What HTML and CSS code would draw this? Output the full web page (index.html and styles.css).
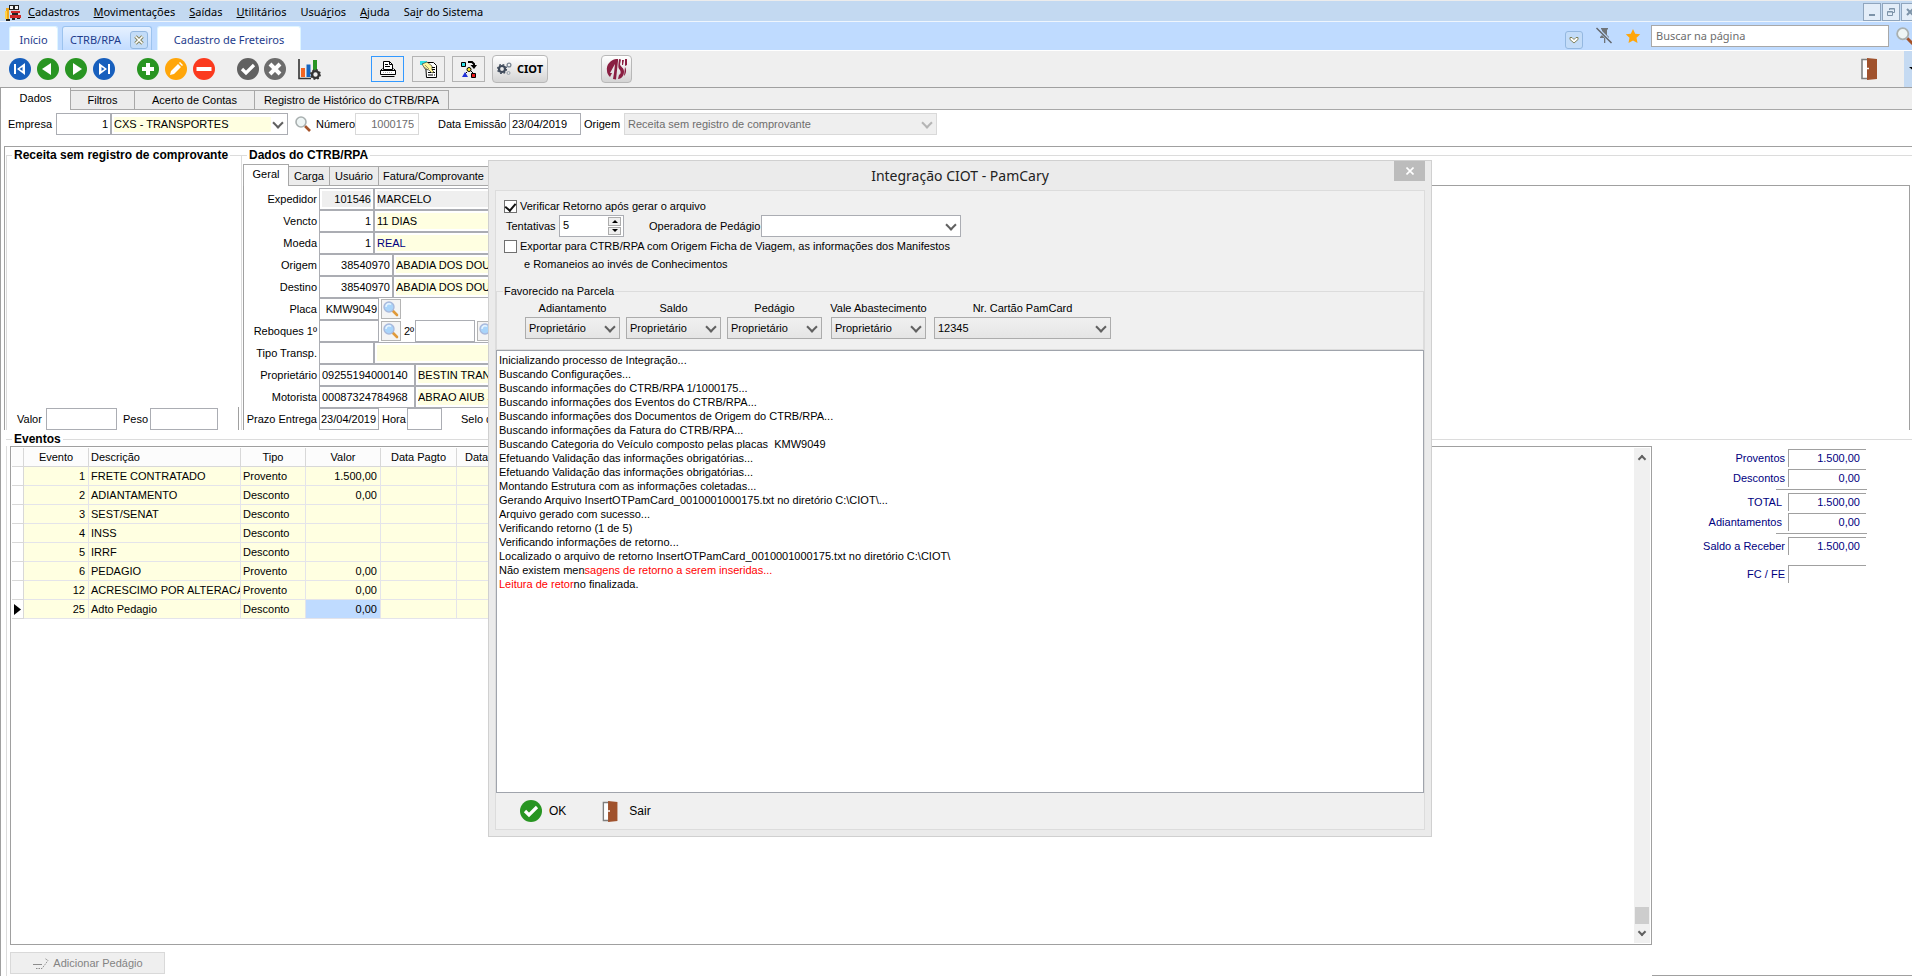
FILE: index.html
```html
<!DOCTYPE html>
<html lang="pt-BR">
<head>
<meta charset="utf-8">
<title>CTRB/RPA</title>
<link rel="stylesheet" href="styles.css">
</head>
<body>
<svg class="defs" width="0" height="0" aria-hidden="true">
  <symbol id="lens" viewBox="0 0 16 16"><path d="M10 10l5 5" stroke="#a5532a" stroke-width="2.6"/><circle cx="6" cy="6" r="5" fill="#eef5f5" stroke="#a9b0b0" stroke-width="1.6"/></symbol>
  <symbol id="lens-blue" viewBox="0 0 16 16"><path d="M9.500 9.500l4.500 4.500" stroke="#e09a3a" stroke-width="2.600" stroke-linecap="round"/><circle cx="6" cy="6" r="5" fill="#a9d4fa" stroke="#a9b9dc" stroke-width="1.400"/><path d="M3 6a3 3 0 0 1 5-2.500" stroke="#e8f5ff" stroke-width="1.500" fill="none"/></symbol>
  <symbol id="door" viewBox="0 0 16 24"><path d="M1 2.500h6v19H1z" fill="#fff" stroke="#808080" stroke-width="1.600"/><path d="M6 1l10 1v20L6 23z" fill="#a0522d"/><path d="M6 11.500h2" stroke="#fff" stroke-width="1.600"/></symbol>
</svg>

<nav class="menu">
  <svg class="app-icon" width="16" height="17" viewBox="0 0 16 17"><path d="M4 1h10v5H4z" fill="#222"/><path d="M5 2h3v3H5zM10 2h3v3h-3z" fill="#f4f4f4"/><path d="M1 4h3v12H1z" fill="#f0a818"/><path d="M0 7h2v8H0z" fill="#ffd24a"/><path d="M5 6h10v6H5z" fill="#d8d8e0"/><path d="M6 7h9v2H6zM5 11h11v3H5z" fill="#d02828"/><path d="M7 9h6v2H7z" fill="#222"/><path d="M1 15h4v2H1zM7 14h3v2H7zM12 14h3v1h-3z" fill="#222"/></svg>
  <a href="#"><u>C</u>adastros</a><a href="#"><u>M</u>ovimentações</a><a href="#"><u>S</u>aídas</a><a href="#"><u>U</u>tilitários</a><a href="#">Usuá<u>r</u>ios</a><a href="#"><u>A</u>juda</a><a href="#">Sa<u>i</u>r do Sistema</a>
  <div class="win-buttons">
    <button aria-label="Minimizar"><svg width="10" height="10" viewBox="0 0 10 10"><path d="M2 8h6" stroke="#7d93a8" stroke-width="2"/></svg></button>
    <button aria-label="Restaurar"><svg width="10" height="10" viewBox="0 0 10 10" fill="none" stroke="#7d93a8"><path d="M3.500 3V1.500h5v4H7M3.500 2h5M1.500 4.500h5v4h-5zM1.500 5h5"/></svg></button>
    <button aria-label="Fechar"><svg width="10" height="10" viewBox="0 0 10 10"><path d="M2 2l6 6M8 2l-6 6" stroke="#7d93a8" stroke-width="2"/></svg></button>
  </div>
</nav>

<header class="pages">
  <button class="page-tab home">Início</button>
  <div class="page-tab current"><button>CTRB/RPA</button><button class="tab-close" aria-label="Fechar aba"><svg width="10" height="10" viewBox="0 0 10 10"><path d="M1.500 1.500l7 7M8.500 1.500l-7 7" stroke="#80805a" stroke-width="3.400"/><path d="M1.500 1.500l7 7M8.500 1.500l-7 7" stroke="#fff" stroke-width="1.600"/></svg></button></div>
  <button class="page-tab fret">Cadastro de Freteiros</button>
  <div class="page-tools">
    <button class="drop" aria-label="Abas"><svg width="10" height="8" viewBox="0 0 10 8"><path d="M1 1.500h2l2 2 2-2h2v2L5 7 1 3.500z" fill="#fff" stroke="#77774a" stroke-width=".9"/></svg></button>
    <button class="pin" aria-label="Fixar"><svg width="16" height="17" viewBox="0 0 16 17"><path d="M5 1h7v1.500h-1V8l2 2v1H9.300v5H8v-5H4v-1l2-2V2.500H5z" fill="#707478"/><path d="M1 1l15 15" stroke="#bfdbff" stroke-width="3"/><path d="M.5 1l15 15" stroke="#606468" stroke-width="1.500"/></svg></button>
    <button class="star" aria-label="Favorito"><svg width="16" height="16" viewBox="0 0 16 16"><path d="M8 1l2.200 4.700 5 .6-3.700 3.500 1 5.100L8 12.400l-4.500 2.500 1-5.100L.8 6.300l5-.6z" fill="#ffa60a"/></svg></button>
    <input type="text" placeholder="Buscar na página" aria-label="Buscar na página">
    <button class="find" aria-label="Buscar"><svg width="18" height="18"><use href="#lens"/></svg></button>
  </div>
</header>

<div class="toolbar">
  <div class="group g-nav">
    <button aria-label="Primeiro"><svg width="22" height="22" viewBox="0 0 22 22"><circle cx="11" cy="11" r="11" fill="#175fbd"/><path d="M5 6h2v10H5zM8 11l8-6v12z" fill="#fff"/><path d="M13.500 9l-3 2 3 2z" fill="#175fbd"/></svg></button>
    <button aria-label="Anterior"><svg width="22" height="22" viewBox="0 0 22 22"><circle cx="11" cy="11" r="11" fill="#289522"/><path d="M5 11l9-6v12z" fill="#fff"/></svg></button>
    <button aria-label="Próximo"><svg width="22" height="22" viewBox="0 0 22 22"><circle cx="11" cy="11" r="11" fill="#289522"/><path d="M17 11L8 5v12z" fill="#fff"/></svg></button>
    <button aria-label="Último"><svg width="22" height="22" viewBox="0 0 22 22"><circle cx="11" cy="11" r="11" fill="#175fbd"/><path d="M15 6h2v10h-2zM14 11L6 5v12z" fill="#fff"/><path d="M8.500 9l3 2-3 2z" fill="#175fbd"/></svg></button>
  </div>
  <div class="group g-edit">
    <button aria-label="Novo"><svg width="22" height="22" viewBox="0 0 22 22"><circle cx="11" cy="11" r="11" fill="#289522"/><path d="M11 5v12M5 11h12" stroke="#fff" stroke-width="4"/></svg></button>
    <button aria-label="Editar"><svg width="22" height="22" viewBox="0 0 22 22"><circle cx="11" cy="11" r="11" fill="#ffa60a"/><path d="M5 17l1-4 7-7 3 3-7 7zM14 5l1-1 3 3-1 1z" fill="#fff"/></svg></button>
    <button aria-label="Excluir"><svg width="22" height="22" viewBox="0 0 22 22"><circle cx="11" cy="11" r="11" fill="#fb3a1e"/><path d="M3.500 11h15" stroke="#fff" stroke-width="4"/></svg></button>
  </div>
  <div class="group g-conf">
    <button aria-label="Confirmar"><svg width="22" height="22" viewBox="0 0 22 22"><circle cx="11" cy="11" r="11" fill="#616161"/><path d="M5 11l4 4 8-8" stroke="#fff" stroke-width="3.200" fill="none"/></svg></button>
    <button aria-label="Cancelar"><svg width="22" height="22" viewBox="0 0 22 22"><circle cx="11" cy="11" r="11" fill="#6c6c6c"/><path d="M6 6l10 10M16 6L6 16" stroke="#fff" stroke-width="4"/></svg></button>
  </div>
  <button class="chart" aria-label="Gráficos"><svg width="23" height="22" viewBox="0 0 23 22"><path d="M1 1v19.500h12" stroke="#333" stroke-width="1.600" fill="none"/><path d="M3 10h4v9H3z" fill="#f26522"/><path d="M8.500 6.500h4V19h-4z" fill="#1565c0"/><path d="M15 2h4v10h-4z" fill="#289522"/><circle cx="17.500" cy="16.500" r="3.400" fill="none" stroke="#333" stroke-width="2.400"/><circle cx="17.500" cy="16.500" r="4.700" fill="none" stroke="#333" stroke-width="1.500" stroke-dasharray="1.840 1.850"/></svg></button>
  <button class="tool print" aria-label="Imprimir"><svg width="18" height="17" viewBox="0 0 18 17" fill="#fff" stroke="#000"><path d="M4.500 8.500v-8h6l3 3v5z"/><path d="M6 3.500h3M6 5.500h5M10.500.5v3h3" fill="none"/><path d="M1.500 9.500l2-2M14.500 7.500l2 2M1.500 9.500h15v4h-15zM2.500 15.500h13" /><path d="M4 11.500h10" stroke="#aaa" stroke-dasharray="1 1"/></svg></button>
  <button class="tool" aria-label="Consultar documento"><svg width="18" height="17" viewBox="0 0 18 17"><path d="M5.500 1.500h8l3 3v12h-10z" fill="#fff" stroke="#000"/><path d="M12 6.500h3M12 8.500h3M8 11.500h3M12 11.500h3M8 14h5M14 14h1" stroke="#000"/><path d="M0 0h7v4H0z" fill="#2fe0e8"/><path d="M2 3l5-2 5 4v4l2 2-2 1-3-3-4-1z" fill="#fff79a" stroke="#222" stroke-width=".6"/><path d="M5 4l4 4M4 6l4 3" stroke="#555" stroke-width=".6"/></svg></button>
  <button class="tool" aria-label="Fluxo"><svg width="18" height="18" viewBox="0 0 18 18" stroke="#000"><path d="M1.500 2.500h4v4h-4z" fill="#2fe0e8"/><path d="M8 2h4l2 2v3" fill="none" stroke-width="2"/><path d="M10.500 5h6.500l-3 4z" stroke="none"/><circle cx="9" cy="9.500" r="2" fill="#ffee2a"/><path d="M7 12l-2 2M11 11l2 2" fill="none"/><path d="M2 17l3-5 3 5z" fill="#2030d8" stroke="none"/><path d="M11.500 13.500h4v4h-4z" fill="#e81818"/></svg></button>
  <button class="ciot"><svg width="15" height="14" viewBox="0 0 15 14" fill="none"><circle cx="5" cy="7" r="3" stroke="#3f4a5a" stroke-width="2.200"/><circle cx="5" cy="7" r="4.500" stroke="#3f4a5a" stroke-width="1.200" stroke-dasharray="1.770"/><circle cx="12" cy="3" r="1.900" stroke="#7b8794" stroke-width="1.300"/><circle cx="11.500" cy="11" r="1.500" stroke="#98a2ac"/></svg><span>CIOT</span></button>
  <button class="logo" aria-label="4S"><svg width="22" height="22" viewBox="0 0 22 22" fill="#8a1f42"><path d="M10 1C4 2 0 7 1 13c0 2 1 4 3 6l2-4H4l5-9-1 9-1 6 3 .500L12 3V1z"/><path d="M13 1l2 .500-1 5c1 3 4 3 4 7s-2 7-6 7.500l1-4c2-1 2-3 1-5-2-2-2-3-1-11zM16 2h2l-1 5h-1zM19 1h2v6l-2 1zM19 9c2 3 1 7-1 9z"/></svg></button>
  <button class="exit" aria-label="Sair"><svg width="16" height="24"><use href="#door"/></svg></button>
  <button class="more" aria-label="Mais"><svg width="5" height="5" viewBox="0 0 5 5"><path d="M0 0h5v4z"/></svg></button>
</div>

<div class="strip" role="tablist">
  <button class="st on" role="tab">Dados</button><button class="st w64" role="tab">Filtros</button><button class="st w120" role="tab">Acerto de Contas</button><button class="st w194" role="tab">Registro de Histórico do CTRB/RPA</button>
</div>

<main class="work">
  <div class="head">
    <label for="empresa">Empresa</label><input id="empresa" class="num w55" value="1">
    <span class="combo w177 pale"><select aria-label="Nome da empresa"><option>CXS - TRANSPORTES</option></select></span>
    <button class="bare" aria-label="Procurar empresa"><svg width="16" height="16"><use href="#lens"/></svg></button>
    <label for="numero">Número</label><input id="numero" class="num w64 off" value="1000175" disabled>
    <label for="emissao" class="emissao">Data Emissão</label><input id="emissao" class="w72" value="23/04/2019">
    <label for="origem-doc">Origem</label><span class="combo w313 off"><select id="origem-doc" disabled><option>Receita sem registro de comprovante</option></select></span>
  </div>

  <div class="panes">
    <fieldset class="receita">
      <legend>Receita sem registro de comprovante</legend>
      <div class="sums"><label for="valor">Valor</label><input id="valor" class="w71"><label for="peso">Peso</label><input id="peso" class="w68"></div>
    </fieldset>
    <fieldset class="dados">
      <legend>Dados do CTRB/RPA</legend>
      <div class="subtabs" role="tablist"><button class="st on" role="tab">Geral</button><button class="st w41" role="tab">Carga</button><button class="st w49" role="tab">Usuário</button><button class="st w110" role="tab">Fatura/Comprovante</button></div>
      <div class="form">
        <div class="row"><label for="exp">Expedidor</label><input id="exp" class="num w55 gray" value="101546"><input class="w200 gray" aria-label="Nome do expedidor" value="MARCELO                   ALVES"></div>
        <div class="row"><label for="ven">Vencto</label><input id="ven" class="num w55" value="1"><input class="w200 pale" aria-label="Prazo de vencimento" value="11 DIAS"></div>
        <div class="row"><label for="moe">Moeda</label><input id="moe" class="num w55" value="1"><input class="w200 pale navy" aria-label="Nome da moeda" value="REAL"></div>
        <div class="row"><label for="ori">Origem</label><input id="ori" class="num w74" value="38540970"><input class="w200 pale" aria-label="Cidade de origem" value="ABADIA DOS DOURADOS"></div>
        <div class="row"><label for="des">Destino</label><input id="des" class="num w74" value="38540970"><input class="w200 pale" aria-label="Cidade de destino" value="ABADIA DOS DOURADOS"></div>
        <div class="row"><label for="pla">Placa</label><input id="pla" class="num w60" value="KMW9049"><button class="look" aria-label="Procurar placa"><svg width="16" height="16"><use href="#lens-blue"/></svg></button></div>
        <div class="row"><label for="re1">Reboques 1º</label><input id="re1" class="w60"><button class="look" aria-label="Procurar reboque 1"><svg width="16" height="16"><use href="#lens-blue"/></svg></button><label class="inline" for="re2">2º</label><input id="re2" class="w60"><button class="look" aria-label="Procurar reboque 2"><svg width="16" height="16"><use href="#lens-blue"/></svg></button></div>
        <div class="row"><label for="tip">Tipo Transp.</label><input id="tip" class="w55"><input class="w200 pale" aria-label="Nome do tipo de transporte"></div>
        <div class="row"><label for="pro">Proprietário</label><input id="pro" class="w96" value="09255194000140"><input class="w200 pale" aria-label="Nome do proprietário" value="BESTIN TRANSPORTES"></div>
        <div class="row"><label for="mot">Motorista</label><input id="mot" class="w96" value="00087324784968"><input class="w200 pale" aria-label="Nome do motorista" value="ABRAO AIUB JR"></div>
        <div class="row"><label for="pra">Prazo Entrega</label><input id="pra" class="w60" value="23/04/2019"><label class="inline" for="hor">Hora</label><input id="hor" class="w35"><label class="inline selo" for="selo">Selo do</label><input id="selo" class="w60"></div>
      </div>
    </fieldset>
  </div>

  <section class="eventos" aria-labelledby="ev-title">
    <h2 id="ev-title">Eventos</h2>
    <div class="ev-body">
      <div class="ev-left">
        <div class="gridbox">
          <table>
            <colgroup><col class="c12"><col class="c65"><col class="c152"><col class="c65"><col class="c75"><col class="c76"><col class="c76"></colgroup>
            <thead><tr><th></th><th>Evento</th><th class="l">Descrição</th><th>Tipo</th><th>Valor</th><th>Data Pagto</th><th class="d">Data</th></tr></thead>
            <tbody>
              <tr><td></td><td>1</td><td>FRETE CONTRATADO</td><td>Provento</td><td>1.500,00</td><td></td><td></td></tr>
              <tr><td></td><td>2</td><td>ADIANTAMENTO</td><td>Desconto</td><td>0,00</td><td></td><td></td></tr>
              <tr><td></td><td>3</td><td>SEST/SENAT</td><td>Desconto</td><td></td><td></td><td></td></tr>
              <tr><td></td><td>4</td><td>INSS</td><td>Desconto</td><td></td><td></td><td></td></tr>
              <tr><td></td><td>5</td><td>IRRF</td><td>Desconto</td><td></td><td></td><td></td></tr>
              <tr><td></td><td>6</td><td>PEDAGIO</td><td>Provento</td><td>0,00</td><td></td><td></td></tr>
              <tr><td></td><td>12</td><td>ACRESCIMO POR ALTERACAO</td><td>Provento</td><td>0,00</td><td></td><td></td></tr>
              <tr><td><svg width="7" height="11" viewBox="0 0 7 11"><path d="M0 0l7 5.500L0 11z"/></svg></td><td>25</td><td>Adto Pedagio</td><td>Desconto</td><td class="sel">0,00</td><td></td><td></td></tr>
            </tbody>
          </table>
          <div class="scroll"><i class="up"></i><b></b><i class="down"></i></div>
        </div>
        <button class="add" disabled><svg width="18" height="14" viewBox="0 0 18 14" fill="none" stroke="#8c8c8c"><path d="M1 8.500h9"/><path d="M4 12.500h6l3-4 3-4-3-2" stroke-dasharray="1.500 1"/></svg>Adicionar Pedágio</button>
      </div>
      <div class="totals">
        <div class="tr"><label for="t1">Proventos</label><output id="t1">1.500,00</output></div>
        <div class="tr"><label for="t2">Descontos</label><output id="t2">0,00</output></div>
        <hr>
        <div class="tr in"><label for="t3">TOTAL</label><output id="t3">1.500,00</output></div>
        <div class="tr in"><label for="t4">Adiantamentos</label><output id="t4">0,00</output></div>
        <hr>
        <div class="tr"><label for="t5">Saldo a Receber</label><output id="t5">1.500,00</output></div>
        <div class="tr last"><label for="t6">FC / FE</label><output id="t6"></output></div>
      </div>
    </div>
  </section>
</main>

<section class="dialog" role="dialog" aria-labelledby="dlg-title">
  <div class="title"><h1 id="dlg-title">Integração CIOT - PamCary</h1><button aria-label="Fechar"><svg width="8" height="8" viewBox="0 0 8 8"><path d="M.5.5l7 7M7.500.5l-7 7" stroke="#fff" stroke-width="1.600"/></svg></button></div>
  <div class="dlg-body">
    <div class="opts">
      <label class="check"><input type="checkbox" checked><span>Verificar Retorno após gerar o arquivo</span></label>
      <div class="line">
        <label for="tent">Tentativas</label>
        <span class="spin"><input id="tent" value="5"><span><button aria-label="Mais um"><i class="tri-up"></i></button><button aria-label="Menos um"><i class="tri-down"></i></button></span></span>
        <label for="oper" class="oper">Operadora de Pedágio</label>
        <span class="combo w200"><select id="oper"><option></option></select></span>
      </div>
      <label class="check"><input type="checkbox"><span>Exportar para CTRB/RPA com Origem Ficha de Viagem, as informações dos Manifestos</span></label>
      <p>e Romaneios ao invés de Conhecimentos</p>
    </div>
    <fieldset class="fav">
      <legend>Favorecido na Parcela</legend>
      <div class="favs">
        <div><label for="f1">Adiantamento</label><span class="combo btn w95"><select id="f1"><option>Proprietário</option></select></span></div>
        <div><label for="f2">Saldo</label><span class="combo btn w95"><select id="f2"><option>Proprietário</option></select></span></div>
        <div><label for="f3">Pedágio</label><span class="combo btn w95"><select id="f3"><option>Proprietário</option></select></span></div>
        <div class="vale"><label for="f4">Vale Abastecimento</label><span class="combo btn w95"><select id="f4"><option>Proprietário</option></select></span></div>
        <div class="card"><label for="f5">Nr. Cartão PamCard</label><span class="combo btn w177"><select id="f5"><option>12345</option></select></span></div>
      </div>
    </fieldset>
    <div class="log" role="log">Inicializando processo de Integração...
Buscando Configurações...
Buscando informações do CTRB/RPA 1/1000175...
Buscando informações dos Eventos do CTRB/RPA...
Buscando informações dos Documentos de Origem do CTRB/RPA...
Buscando informações da Fatura do CTRB/RPA...
Buscando Categoria do Veículo composto pelas placas  KMW9049
Efetuando Validação das informações obrigatórias...
Efetuando Validação das informações obrigatórias...
Montando Estrutura com as informações coletadas...
Gerando Arquivo InsertOTPamCard_0010001000175.txt no diretório C:\CIOT\...
Arquivo gerado com sucesso...
Verificando retorno (1 de 5)
Verificando informações de retorno...
Localizado o arquivo de retorno InsertOTPamCard_0010001000175.txt no diretório C:\CIOT\
Não existem men<em>sagens de retorno a serem inseridas...</em>
<em>Leitura de retor</em>no finalizada.</div>
    <div class="actions">
      <button class="ok"><svg width="22" height="22" viewBox="0 0 22 22"><circle cx="11" cy="11" r="11" fill="#289522"/><path d="M5 11l4 4 8-8" stroke="#fff" stroke-width="3.200" fill="none"/></svg>OK</button>
      <button class="sair"><svg width="16" height="23" viewBox="0 0 16 24"><use href="#door"/></svg>Sair</button>
    </div>
  </div>
</section>
</body>
</html>
```
FILE: styles.css
```css
* { box-sizing: border-box; }
body {
  margin: 0;
  min-height: 100vh;
  display: flex;
  flex-direction: column;
  position: relative;
  overflow: hidden;
  background: #fff;
  color: #000;
  font: 11px/14px "Liberation Sans", Arial, sans-serif;
}
button, input, select, output { font: inherit; color: inherit; }
button { border: 0; padding: 0; background: none; }
svg { display: block; flex: none; }
a { color: inherit; text-decoration: none; }
label { white-space: nowrap; }
.defs { position: absolute; }

/* menu bar */
.menu {
  height: 22px;
  display: flex;
  align-items: center;
  gap: 14px;
  padding: 2px 0 0 5px;
  background: #c3d9f1;
  border-top: 1px solid #ececec;
  border-bottom: 1px solid #eef5fc;
  font: 11px/18px "Noto Sans", sans-serif;
  white-space: nowrap;
}
.app-icon { margin-right: -7px; }
.win-buttons { margin-left: auto; display: flex; gap: 1px; align-self: stretch; flex: none; margin-right: -7px; }
.win-buttons button { width: 18px; height: 18px; border: 1px solid #8fa5bd; background: #e3edf8; display: grid; place-items: center; }

/* page tabs */
.pages {
  height: 29px;
  display: flex;
  align-items: flex-end;
  padding-left: 9px;
  background: #bfdbff;
  border-bottom: 1px solid #fff;
  font: 11px/16px "Noto Sans", sans-serif;
  color: #1e3c8c;
}
.page-tab { height: 24px; background: #fff; border: 1px solid #dff5ff; border-bottom: 0; border-radius: 3px 3px 0 0; text-align: center; white-space: nowrap; padding-top: 2px; }
.page-tab.home { width: 49px; margin-right: 4px; }
.page-tab.current { width: 90px; margin-right: 5px; background: linear-gradient(#e6f1ff, #c2dcff); border-color: #9cc3ee; display: flex; align-items: center; justify-content: space-between; padding: 2px 3px 0 7px; }
.page-tab.fret { width: 144px; }
.tab-close, .drop { width: 18px; height: 18px; border: 1px solid #94b8e0; border-radius: 3px; background: #c3dcf8; display: grid; place-items: center; }
.page-tools { margin-left: auto; align-self: stretch; display: flex; align-items: center; margin-right: -2px; padding-bottom: 1px; }
.drop { margin: 8px 13px 0 0; }
.pin { margin-right: 13px; }
.star { margin-right: 10px; }
.page-tools input { width: 238px; height: 22px; border: 1px solid #a8a8a8; padding: 0 4px; background: #fff; font-size: 11px; margin-right: 7px; }
.page-tools input::placeholder { color: #6d6d6d; }

/* toolbar */
.toolbar { height: 37px; display: flex; align-items: center; background: #efefef; border-bottom: 1px solid #a0a0a0; padding-left: 9px; }
.group { display: flex; }
.g-nav, .g-edit { gap: 6px; }
.g-nav { margin-right: 22px; }
.g-edit { margin-right: 22px; }
.g-conf { gap: 5px; margin-right: 12px; }
.chart { margin-right: 50px; }
.tool { width: 33px; height: 26px; border: 1px solid #b4b4b4; display: grid; place-items: center; margin-right: 7px; }
.tool.print { border-color: #3399ff; margin-right: 8px; }
.ciot, .logo { height: 28px; border: 1px solid #b8b8b8; border-radius: 4px; background: linear-gradient(#fff, #d4d4d4); display: flex; align-items: center; justify-content: center; }
.ciot { width: 56px; gap: 5px; font: bold 11px/16px "Noto Sans", sans-serif; margin-right: 53px; }
.logo { width: 31px; }
.exit { margin-left: auto; margin-right: 27px; }
.more { width: 8px; align-self: stretch; background: #c5daf2; padding-left: 5px; overflow: hidden; }

/* tab strips */
.strip, .subtabs { display: flex; align-items: flex-end; }
.strip { height: 22px; background: #efefef; border-bottom: 1px solid #a8a8a8; border-left: 1px solid #a0a0a0; flex: none; }
.st { height: 20px; border: 1px solid #a8a8a8; border-left: 0; background: #ececec; white-space: nowrap; margin-bottom: -1px; }
.st.on { background: #fff; height: 22px; border-bottom: 0; border-top: 0; padding-bottom: 3px; }
.strip .on { width: 70px; }
.w64 { width: 64px; } .w120 { width: 120px; } .w194 { width: 194px; }
.w41 { width: 41px; } .w49 { width: 49px; } .w110 { width: 110px; }

/* fields */
input { height: 22px; border: 1px solid #abadb3; padding: 2px; background: #fff; outline: 0; border-radius: 0; }
.num { text-align: right; }
.w35 { width: 35px; } .w55 { width: 55px; } .w60 { width: 60px; } .w68 { width: 68px; } .w71 { width: 71px; }
.w72 { width: 72px; } .w74 { width: 74px; } .w95 { width: 95px; } .w96 { width: 96px; }
.w177 { width: 177px; } .w200 { width: 200px; } .w313 { width: 313px; }
input.w60 { padding: 2px 1px; }
input.pale { background: linear-gradient(#ffffe1, #ffffe1) content-box, #fff; }
input.gray { background: linear-gradient(#efefef, #efefef) content-box, #fff; }
.navy { color: #000080; }
.off, .off select { color: #6d6d6d; opacity: 1; }
input.off { border-color: #d9d9d9; padding-right: 4px; background: #fff; }
.combo { position: relative; display: inline-block; height: 22px; flex: none; }
.combo select { appearance: none; width: 100%; height: 22px; border: 1px solid #abadb3; border-radius: 0; background: #fff; padding: 0 16px 1px 3px; outline: 0; opacity: 1; }
.combo::after { content: ""; position: absolute; right: 6px; top: 6px; width: 6px; height: 6px; border: solid #606060; border-width: 0 2px 2px 0; transform: rotate(45deg); pointer-events: none; }
.combo.pale select { background: linear-gradient(90deg, #ffffe1 157px, #fff 157px) 2px 3px / 100% 15px no-repeat, #fff; padding-left: 2px; }
.combo.off select { background: #efefef; border-color: #d9d9d9; }
.combo.off::after { border-color: #b4b4b4; }
.combo.btn select { background: linear-gradient(#f0f0f0, #e5e5e5); border-color: #acacac; }

/* work area */
.work { flex: 1; display: flex; flex-direction: column; border-left: 1px solid #a0a0a0; min-width: 0; }
.head { display: flex; align-items: center; padding: 3px 0 11px 7px; }
.head label[for="empresa"] { width: 48px; }
.head .combo.pale { margin-right: 7px; }
.head .bare { margin-right: 5px; }
.head label[for="numero"] { width: 39px; }
.emissao { margin-left: 19px; width: 71px; }
.head label[for="origem-doc"] { margin-left: 3px; width: 40px; }
fieldset { margin: 0; padding: 0; border: 0; min-width: 0; }
legend { padding: 0 2px; margin-left: 5px; }
.panes { display: flex; margin-left: 3px; border-top: 1px solid #a0a0a0; border-left: 1px solid #a0a0a0; padding: 1px 0 0 1px; }
.panes legend, .eventos h2 { font: bold 12px/14px "Liberation Sans", Arial, sans-serif; }
.receita { width: 236px; border: 1px solid #dcdcdc; border-bottom: 0; display: flex; flex-direction: column; flex: none; }
.sums { margin-top: auto; display: flex; align-items: center; height: 23px; margin-right: 2px; border-right: 1px solid #a0a0a0; padding-left: 10px; }
.sums label { width: 29px; }
.sums label[for="peso"] { width: 27px; margin-left: 6px; }
.dados { flex: 1; border-top: 1px solid #dcdcdc; }
.dados legend { margin-left: 5px; }
.subtabs { height: 23px; padding-left: 1px; }
.subtabs .on { width: 46px; border: 1px solid #a8a8a8; border-bottom: 0; position: relative; }
.form { margin-right: 2px; margin-left: 1px; border: 1px solid #a0a0a0; border-bottom: 0; padding-top: 2px; overflow: hidden; }
.row { display: flex; align-items: center; height: 22px; }
.row > label:first-child { width: 75px; padding-right: 2px; text-align: right; }
.row > label:first-child, .row input { flex: none; }
.look { width: 20px; height: 20px; border: 1px solid #b4b4b4; background: #f4f4f4; display: grid; place-items: center; margin-left: 2px; flex: none; }
.row .inline { margin-left: 3px; width: 25px; }
.row .inline[for="re2"] { width: 11px; }
.row .selo { margin-left: 19px; width: 45px; }

/* events */
.eventos { flex: 1; margin: 2px 0 0 5px; display: flex; flex-direction: column; }
.eventos h2 { margin: 0; display: flex; align-items: center; gap: 2px; }
.eventos h2::before, .eventos h2::after { content: ""; height: 1px; background: #dcdcdc; width: 6px; }
.eventos h2::after { flex: 1; }
.ev-body { flex: 1; display: flex; padding-left: 3px; border-left: 1px solid #dcdcdc; }
.ev-left { flex: 1; display: flex; flex-direction: column; align-items: flex-start; min-width: 0; padding-bottom: 2px; }
.gridbox { flex: 1; align-self: stretch; border: 1px solid #a0a0a0; padding: 1px; display: flex; justify-content: space-between; align-items: flex-start; }
table { table-layout: fixed; width: 521px; border-spacing: 0; flex: none; }
.c12 { width: 12px; } .c65 { width: 65px; } .c152 { width: 152px; } .c75 { width: 75px; } .c76 { width: 76px; }
th, td { height: 19px; padding: 0 2px; border-right: 1px solid #e4e4ea; border-bottom: 1px solid #e4e4ea; font-weight: normal; overflow: hidden; white-space: nowrap; line-height: 14px; }
th { background: #fcfcfc; border-color: #d8d8d8; }
th.l { text-align: left; }
th.d { text-align: left; padding-left: 8px; }
td { background: #ffffe1; }
td:first-child { background: #fff; border-color: #d8d8d8; }
td:nth-child(2), td:nth-child(5) { text-align: right; padding-right: 3px; }
td:nth-child(3) { padding-right: 0; }
td.sel { background: #bfdbff; }
.scroll { width: 16px; align-self: stretch; background: #f0f0f0; display: flex; flex-direction: column; align-items: center; padding: 8px 0; }
.scroll i { width: 6px; height: 6px; border: solid #606060; border-width: 2px 0 0 2px; transform: rotate(45deg); }
.scroll .down { border-width: 0 2px 2px 0; }
.scroll b { width: 14px; height: 17px; background: #cdcdcd; margin: auto 0 5px; }
.add { width: 155px; height: 22px; margin-top: 7px; border: 1px solid #d9d9d9; background: #efefef; color: #838383; display: flex; align-items: center; justify-content: center; gap: 3px; flex: none; }
.totals { width: 260px; padding: 3px 45px 0 0; color: #000080; display: flex; flex-direction: column; align-items: flex-end; flex: none; border-bottom: 1px solid #a0a0a0; }
.tr { height: 20px; display: flex; gap: 3px; padding-right: 1px; }
.tr.in { gap: 6px; }
.tr label { padding-top: 2px; }
.tr output { width: 78px; height: 18px; border: solid #a0a0a0; border-width: 1px 0 0 1px; text-align: right; padding: 1px 6px 0 0; }
.tr.last { margin-top: 8px; }
.totals hr { width: 91px; margin: 0 0 3px; border: 0; border-top: 1px solid #a0a0a0; }

/* dialog window */
.dialog { position: absolute; left: 488px; top: 160px; width: 944px; height: 677px; display: flex; flex-direction: column; background: #ebebeb; border: 1px solid #d0d0d0; padding: 0 6px 6px; }
.title { height: 29px; display: flex; justify-content: center; position: relative; flex: none; }
.title h1 { margin: 5px 0 0; font: 14px/20px "Noto Sans", sans-serif; color: #222; }
.title button { position: absolute; right: 0; top: 0; width: 31px; height: 20px; background: #bcbcbc; display: grid; place-items: center; }
.dlg-body { flex: 1; display: flex; flex-direction: column; background: #f0f0f0; border: 1px solid #dcdcdc; }
.opts { padding: 8px 0 0 8px; }
.check { display: flex; align-items: center; height: 14px; gap: 3px; }
.check input { appearance: none; margin: 0; width: 13px; height: 13px; border: 1px solid #707070; background: #fff; padding: 0; display: grid; place-items: center; }
.check input:checked::after { content: ""; width: 5px; height: 8px; margin-bottom: 2px; border: solid #111; border-width: 0 2px 2px 0; transform: rotate(40deg); }
.line { display: flex; align-items: center; margin: 2px 0; padding-left: 2px; }
.line label { width: 53px; }
.line .oper { margin-left: 25px; width: 112px; }
.spin { width: 65px; height: 22px; border: 1px solid #abadb3; background: #fff; display: flex; padding: 1px 2px; }
.spin input { border: 0; width: 46px; height: 16px; padding: 0 1px; }
.spin > span { display: flex; flex-direction: column; gap: 1px; width: 13px; }
.spin button { flex: 1; border: 1px solid #acacac; background: #efefef; display: grid; place-items: center; }
.tri-up, .tri-down { width: 0; height: 0; border: 3px solid transparent; }
.tri-up { border-bottom-color: #000; border-top: 0; }
.tri-down { border-top-color: #000; border-bottom: 0; }
.opts p { margin: 4px 0 0 20px; }
.fav { margin-top: 13px; border: 1px solid #dcdcdc; height: 66px; }
.fav legend { margin-left: 6px; padding: 0 1px; }
.favs { display: flex; gap: 6px; padding: 3px 0 0 28px; }
.favs > div { display: flex; flex-direction: column; align-items: center; gap: 2px; }
.favs label { margin: 0 -4px; }
.favs .vale { margin-left: 3px; }
.favs .card { margin-left: 2px; }
.log { flex: 1; border: 1px solid #a0a4ac; background: #fff; padding: 2px; white-space: pre-wrap; line-height: 14px; }
.log em { font-style: normal; color: #f00; }
.actions { height: 36px; display: flex; align-items: center; padding-left: 24px; gap: 36px; flex: none; }
.actions button { display: flex; align-items: center; gap: 7px; font-size: 12px; }
.actions .sair { gap: 11px; }
```
